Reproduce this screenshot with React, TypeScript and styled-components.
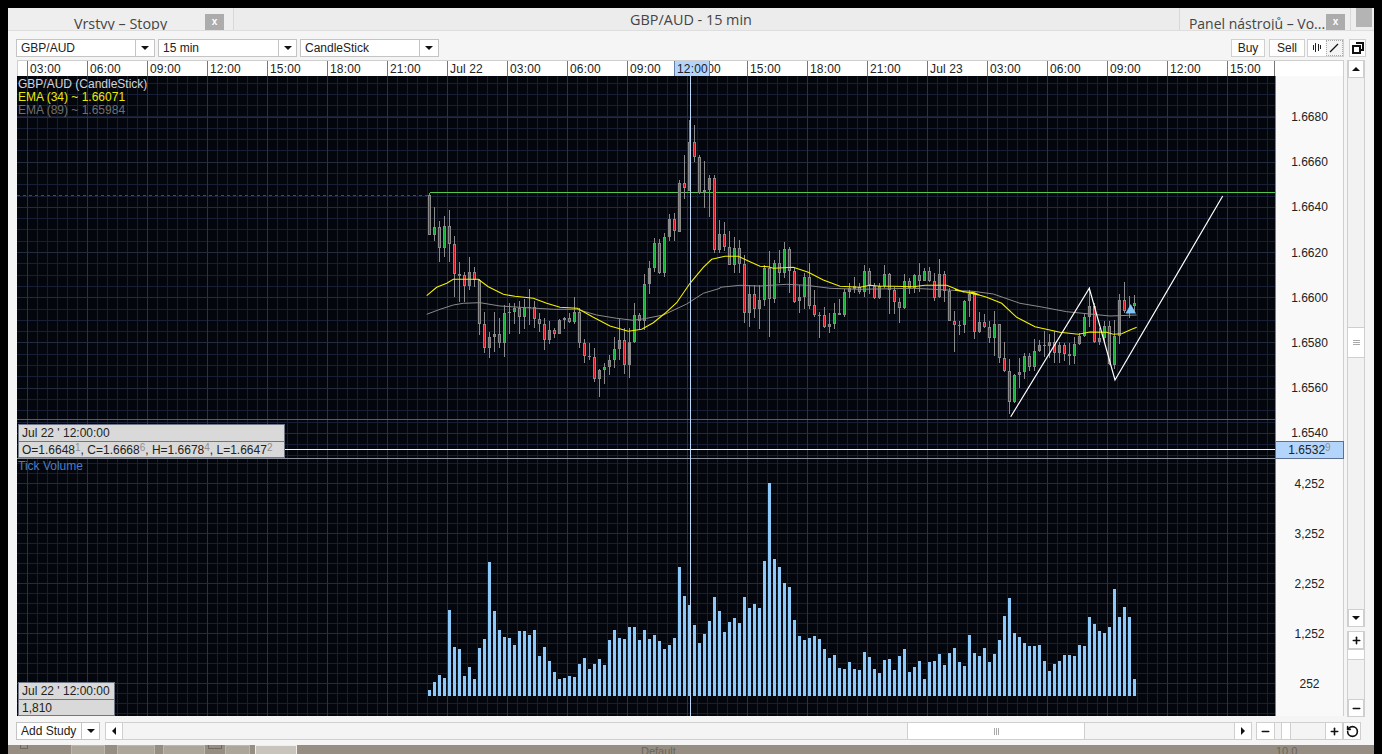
import React from 'react';
import styled, { createGlobalStyle } from 'styled-components';
import { Plus, Minus, RotateCcw } from 'lucide-react';

const GlobalStyle = createGlobalStyle`
  html, body {
    margin: 0;
    padding: 0;
    background: #000;
    overflow: hidden;
  }
  * {
    box-sizing: border-box;
  }
`;

const Page = styled.div`
  width: 1382px;
  height: 754px;
  padding: 8px 0 0 8px;
  background: #000;
  font-family: "Liberation Sans", Arial, sans-serif;
  font-size: 12px;
  color: #222;
  display: flex;
  flex-direction: column;
`;

const Window = styled.div`
  width: 1366px;
  height: 737px;
  background: #f5f5f5;
  display: flex;
  flex-direction: column;
  flex: none;
`;

const TabBar = styled.div`
  height: 23px;
  display: flex;
  background: #eee;
  flex: none;
`;

const Tab = styled.div<{ $width: number; $flex?: boolean; $bg?: string }>`
  width: ${p => p.$width}px;
  flex: ${p => (p.$flex ? '1' : 'none')};
  background: ${p => p.$bg || '#eeeeee'};
  border-bottom: 1px solid #dedede;
  border-right: 1px solid #d8d8d8;
  display: flex;
  justify-content: center;
  position: relative;
  overflow: hidden;
`;

const TabTitle = styled.span<{ $top: number; $left?: number; $size: number }>`
  font-family: "Open Sans", sans-serif;
  font-size: ${p => p.$size}px;
  line-height: 20px;
  color: #444;
  margin-top: ${p => p.$top}px;
  margin-left: ${p => p.$left || 0}px;
  white-space: nowrap;
`;

const TabClose = styled.div<{ $right: number }>`
  position: absolute;
  right: ${p => p.$right}px;
  top: 6px;
  width: 19px;
  height: 17px;
  background: #acacac;
  color: #fff;
  font-size: 10px;
  font-weight: bold;
  text-align: center;
  line-height: 16px;
`;

const CornerBlock = styled.div`
  width: 23px;
  flex: none;
  background: #eee;
  border-bottom: 1px solid #dedede;
  display: flex;
  justify-content: flex-end;
  padding-right: 2px;
`;

const CornerThumb = styled.div`
  width: 16px;
  height: 19px;
  background: #b4b4b4;
`;

const Toolbar = styled.div`
  height: 29px;
  flex: none;
  padding: 8px 8px 3px 8px;
  display: flex;
  background: #f5f5f5;
`;

const SelectBox = styled.div`
  height: 18px;
  display: flex;
  margin-right: 3px;
  background: #fff;
  border: 1px solid #c4c4c4;
`;

const SelectValue = styled.div<{ $width: number }>`
  width: ${p => p.$width}px;
  padding-left: 4px;
  line-height: 17px;
  white-space: nowrap;
  border-right: 1px solid #c4c4c4;
`;

const SelectArrow = styled.div<{ $width: number }>`
  width: ${p => p.$width}px;
  display: flex;
  align-items: center;
  justify-content: center;
`;

const Caret = styled.span<{ $dir: 'up' | 'down' | 'left' | 'right' }>`
  display: block;
  width: 0;
  height: 0;
  border-style: solid;
  border-color: transparent;
  ${p => (p.$dir === 'down' ? 'border-width: 4px 4px 0 4px; border-top-color: #111;' : '')}
  ${p => (p.$dir === 'up' ? 'border-width: 0 4px 4px 4px; border-bottom-color: #111;' : '')}
  ${p => (p.$dir === 'left' ? 'border-width: 4px 4px 4px 0; border-right-color: #111;' : '')}
  ${p => (p.$dir === 'right' ? 'border-width: 4px 0 4px 4px; border-left-color: #111;' : '')}
`;

const Spacer = styled.div`
  flex: 1;
`;

const ToolButton = styled.div<{ $width: number; $ml?: number }>`
  width: ${p => p.$width}px;
  height: 18px;
  margin-left: ${p => p.$ml || 0}px;
  background: #fff;
  border: 1px solid #d0d0d0;
  text-align: center;
  line-height: 17px;
  display: flex;
  align-items: center;
  justify-content: center;
`;

const ToolGroup = styled.div`
  width: 37px;
  height: 18px;
  margin-left: 2px;
  display: flex;
  border: 1px solid #d0d0d0;
  background: #fff;
`;

const ToolCell = styled.div<{ $active?: boolean }>`
  flex: 1;
  display: flex;
  align-items: center;
  justify-content: center;
  ${p => (p.$active ? 'outline: 1px dotted #aaa; outline-offset: -1px; background: #f4f4f4;' : '')}
`;

const Main = styled.div`
  height: 657px;
  flex: none;
  padding-left: 9px;
  display: flex;
  gap: 3px;
`;

const ChartColumn = styled.div`
  width: 1327px;
  display: flex;
  flex-direction: column;
`;

const TimeAxis = styled.div`
  height: 16px;
  flex: none;
  display: flex;
  background: #fff;
  border: 1px solid #cfcfcf;
  border-bottom: none;
  position: relative;
  overflow: hidden;
`;

const TimeCell = styled.div<{ $width: number }>`
  width: ${p => p.$width}px;
  flex: none;
  border-right: 1px solid #777;
  padding-left: 2px;
  line-height: 16px;
  letter-spacing: 0.15px;
  white-space: nowrap;
  color: #222;
`;

const TimeFiller = styled.div`
  flex: 1;
`;

const TimeMarker = styled.div`
  position: absolute;
  left: 656px;
  top: 0;
  width: 36px;
  height: 16px;
  background: #b4d5fb;
  border-left: 1px solid #667fa6;
  border-right: 1px solid #667fa6;
  line-height: 16px;
  padding-left: 2px;
  letter-spacing: 0.15px;
`;

const ChartBody = styled.div`
  height: 640px;
  flex: none;
  display: flex;
`;

const Canvas = styled.div`
  width: 1258px;
  height: 640px;
  flex: none;
  position: relative;
  background: #04060d;
`;

const ChartSvg = styled.svg`
  display: block;
`;

const LegendBlock = styled.div`
  position: absolute;
  left: 1px;
  top: 2px;
`;

const LegendLine = styled.div<{ $color: string }>`
  height: 13px;
  line-height: 13px;
  color: ${p => p.$color};
  white-space: nowrap;
`;

const VolumeLabel = styled.div`
  position: absolute;
  left: 1px;
  top: 383px;
  height: 14px;
  line-height: 14px;
  color: #4b7cc4;
`;

const DataBox = styled.div<{ $top: number; $width: number }>`
  position: absolute;
  left: 1px;
  top: ${p => p.$top}px;
  width: ${p => p.$width}px;
  background: #d9d9d9;
  border: 1px solid #6f7685;
`;

const DataRow = styled.div`
  height: 16px;
  line-height: 16px;
  padding-left: 3px;
  color: #222;
  white-space: nowrap;
  & + & {
    border-top: 1px solid #6f7685;
  }
`;

const Sup = styled.sup`
  font-size: 10px;
  line-height: 0;
  color: #8f8f8f;
  vertical-align: 3px;
`;

const PriceAxis = styled.div`
  width: 69px;
  flex: none;
  background: #f9f9f9;
  border-right: 1px solid #cfcfcf;
  border-left: 1px solid #7a8090;
  position: relative;
  display: flex;
  flex-direction: column;
`;

const PriceSection = styled.div`
  height: 382px;
  flex: none;
  padding-top: 19px;
`;

const VolumeSection = styled.div`
  flex: 1;
  padding-top: 1px;
`;

const AxisLabel = styled.div<{ $height: number }>`
  height: ${p => p.$height}px;
  line-height: ${p => p.$height}px;
  text-align: center;
  color: #222;
`;

const PriceTag = styled.div`
  position: absolute;
  left: -1px;
  right: -1px;
  top: 365px;
  height: 18px;
  background: #b4d5fb;
  border: 1px solid #5f6f8f;
  text-align: center;
  line-height: 17px;
  color: #222;
`;

const SideColumn = styled.div`
  width: 18px;
  display: flex;
  flex-direction: column;
  gap: 4px;
`;

const VScroll = styled.div<{ $height: number }>`
  height: ${p => p.$height}px;
  flex: none;
  display: flex;
  flex-direction: column;
  background: #f2f2f2;
  border-left: 1px solid #cfcfcf;
  border-right: 1px solid #cfcfcf;
`;

const ScrollButton = styled.div<{ $size?: number }>`
  height: 18px;
  width: ${p => (p.$size ? `${p.$size}px` : 'auto')};
  flex: none;
  background: #fff;
  border: 1px solid #cfcfcf;
  display: flex;
  align-items: center;
  justify-content: center;
`;

const VTrack = styled.div`
  flex: 1;
`;

const VThumb = styled.div<{ $top: number; $height: number }>`
  margin-top: ${p => p.$top}px;
  height: ${p => p.$height}px;
  background: #fff;
  border-top: 1px solid #cfcfcf;
  border-bottom: 1px solid #cfcfcf;
  display: flex;
  align-items: center;
  justify-content: center;
`;

const GripH = styled.div`
  width: 7px;
  height: 5px;
  background: repeating-linear-gradient(to bottom, #aaa 0, #aaa 1px, transparent 1px, transparent 2px);
`;

const GripV = styled.div`
  width: 5px;
  height: 7px;
  background: repeating-linear-gradient(to right, #aaa 0, #aaa 1px, transparent 1px, transparent 2px);
`;

const BottomBar = styled.div`
  height: 18px;
  flex: none;
  margin-top: 5px;
  padding-left: 8px;
  display: flex;
`;

const StudySelect = styled(SelectBox)`
  margin-right: 5px;
`;

const HScroll = styled.div<{ $width: number; $ml?: number }>`
  width: ${p => p.$width}px;
  margin-left: ${p => p.$ml || 0}px;
  flex: none;
  display: flex;
  background: #f4f4f4;
  border-top: 1px solid #cfcfcf;
  border-bottom: 1px solid #cfcfcf;
`;

const HThumb = styled.div<{ $left: number; $width: number }>`
  margin-left: ${p => p.$left}px;
  width: ${p => p.$width}px;
  flex: none;
  background: #fff;
  border-left: 1px solid #cfcfcf;
  border-right: 1px solid #cfcfcf;
  display: flex;
  align-items: center;
  justify-content: center;
`;

const HButton = styled(ScrollButton)`
  margin-top: -1px;
  margin-bottom: -1px;
  height: 18px;
`;

const HSpace = styled.div`
  flex: 1;
`;

const Desktop = styled.div`
  flex: none;
  width: 1366px;
  height: 9px;
  background: #968e82;
  display: flex;
  overflow: hidden;
  padding-left: 12px;
  color: #6b665c;
  font-size: 11px;
`;

const DesktopItem = styled.div<{ $width: number; $ml?: number; $tone?: 'frame' | 'mid' | 'light' }>`
  width: ${p => p.$width}px;
  margin-left: ${p => p.$ml || 0}px;
  height: 9px;
  flex: none;
  line-height: 13px;
  white-space: nowrap;
  ${p => (p.$tone === 'frame' ? 'border: 1px solid #6f695f; border-top: none; height: 4px;' : '')}
  ${p => (p.$tone === 'mid' ? 'background: #aca69a; border: 1px solid #bdb8ae; border-bottom: none;' : '')}
  ${p => (p.$tone === 'light' ? 'background: #c8c4bb; border: 1px solid #f0eeea; border-bottom: none;' : '')}
`;

type Candle = [number, number, number, number, string];

const fromZoom = (base: number, rows: Candle[]): Candle[] =>
  rows.map(([h, t, b, l, c]) => [base + h / 3, base + t / 3, base + b / 3, base + l / 3, c]);

const candles: Candle[] = [
  ...fromZoom(180, [
    [40, 46, 166, 166, 'r'], [82, 142, 166, 184, 'g'], [124, 142, 205, 245, 'r'], [108, 139, 205, 232, 'g'],
    [91, 139, 193, 245, 'r'], [168, 193, 283, 350, 'r'], [247, 283, 287, 365, 'n'], [277, 286, 319, 365, 'r'],
    [232, 277, 319, 331, 'g'], [262, 277, 300, 322, 'r'], [298, 300, 433, 466, 'r'], [397, 433, 505, 520, 'r'],
    [455, 472, 505, 535, 'g'], [397, 463, 472, 517, 'g'], [415, 463, 490, 505, 'r'], [376, 400, 490, 532, 'g'],
    [370, 397, 400, 463, 'n'], [370, 385, 397, 433, 'g'], [364, 385, 412, 463, 'r'], [358, 382, 412, 448, 'g'],
    [328, 380, 382, 436, 'n'], [364, 380, 418, 445, 'r'], [400, 418, 433, 457, 'r'], [415, 433, 481, 511, 'r'],
    [424, 451, 481, 493, 'g'], [445, 451, 463, 475, 'r'], [418, 421, 463, 463, 'g'], [412, 415, 421, 447, 'g'],
    [400, 415, 426, 430, 'r'], [352, 397, 426, 433, 'g'], [385, 397, 490, 505, 'r'], [478, 490, 529, 550, 'r'],
    [490, 529, 532, 541, 'n'], [505, 532, 598, 607, 'r'], [568, 571, 598, 652, 'g'], [550, 562, 571, 613, 'g'],
    [526, 541, 562, 586, 'g'], [472, 508, 541, 565, 'g'], [418, 481, 508, 541, 'g'], [445, 481, 556, 583, 'r'],
    [445, 487, 556, 595, 'n'], [370, 406, 487, 490, 'g'], [400, 406, 424, 451, 'r'], [283, 313, 424, 451, 'g'],
    [244, 265, 313, 341, 'n'], [175, 190, 265, 277, 'g'], [178, 190, 280, 283, 'r'], [160, 172, 280, 292, 'g'],
    [103, 118, 172, 184, 'n'], [100, 118, 154, 184, 'r'],
  ]),
  ...fromZoom(110, [
    [210, 220, 365, 365, 'g'], [135, 220, 235, 268, 'r'], [30, 97, 242, 242, 'g'], [45, 97, 142, 155, 'r'],
    [135, 142, 250, 253, 'r'], [154, 241, 250, 295, 'n'], [196, 205, 241, 322, 'g'], [196, 205, 421, 430, 'r'],
    [331, 373, 421, 430, 'g'], [337, 373, 412, 424, 'r'], [364, 412, 466, 466, 'r'], [382, 415, 466, 490, 'g'],
    [391, 415, 463, 490, 'r'], [436, 463, 610, 640, 'r'], [526, 553, 610, 652, 'g'], [526, 553, 598, 625, 'r'],
    [526, 571, 598, 658, 'g'], [466, 475, 571, 589, 'g'], [424, 475, 568, 682, 'r'], [451, 460, 568, 580, 'g'],
    [421, 460, 490, 520, 'r'], [397, 418, 490, 505, 'g'], [412, 418, 484, 550, 'r'], [475, 484, 577, 580, 'r'],
    [526, 562, 574, 610, 'g'], [490, 502, 562, 598, 'g'], [460, 502, 589, 598, 'r'], [541, 586, 616, 622, 'r'],
    [607, 615, 617, 685, 'n'], [592, 616, 652, 655, 'r'], [610, 643, 652, 670, 'g'], [580, 610, 643, 658, 'g'],
    [568, 610, 616, 616, 'r'], [538, 547, 616, 622, 'g'], [520, 535, 547, 565, 'g'], [502, 529, 538, 550, 'n'],
    [520, 532, 547, 553, 'r'], [466, 484, 547, 562, 'g'], [475, 484, 526, 553, 'r'], [520, 529, 565, 568, 'r'],
    [520, 529, 565, 568, 'g'], [466, 493, 529, 535, 'g'], [490, 493, 541, 613, 'r'], [532, 541, 577, 613, 'r'],
    [565, 577, 595, 640, 'r'], [493, 514, 595, 598, 'g'], [505, 514, 535, 553, 'r'], [493, 496, 535, 550, 'g'],
    [460, 496, 514, 547, 'r'], [475, 484, 514, 514, 'g'], [472, 484, 514, 517, 'r'], [490, 514, 565, 572, 'r'],
    [448, 493, 562, 565, 'g'],
  ]),
  ...fromZoom(180, [
    [274, 283, 334, 367, 'r'], [325, 334, 424, 424, 'r'], [394, 424, 436, 515, 'r'], [424, 435, 437, 466, 'n'],
    [361, 364, 436, 460, 'g'], [331, 343, 364, 412, 'g'], [340, 343, 457, 478, 'r'], [397, 427, 457, 460, 'g'],
    [403, 427, 442, 445, 'r'], [424, 442, 475, 490, 'r'], [394, 433, 475, 529, 'g'], [433, 433, 535, 550, 'r'],
    [487, 535, 574, 577, 'r'], [538, 574, 667, 703, 'r'], [583, 586, 667, 670, 'g'], [535, 577, 586, 625, 'g'],
    [520, 529, 577, 598, 'g'], [520, 529, 562, 574, 'r'], [478, 514, 562, 574, 'g'], [481, 496, 514, 517, 'g'],
    [454, 496, 499, 532, 'n'], [463, 487, 499, 535, 'g'], [454, 487, 520, 550, 'r'], [487, 496, 520, 550, 'g'],
    [490, 496, 523, 544, 'r'], [490, 523, 529, 556, 'n'], [472, 493, 529, 553, 'g'], [460, 469, 493, 496, 'g'],
    [403, 412, 469, 472, 'g'], [322, 379, 412, 442, 'g'], [370, 379, 487, 490, 'r'], [445, 475, 487, 496, 'g'],
    [424, 439, 475, 487, 'g'], [424, 439, 553, 556, 'r'], [421, 469, 556, 568, 'g'], [343, 361, 469, 493, 'g'],
    [307, 361, 394, 400, 'r'], [349, 394, 400, 415, 'n'], [346, 370, 379, 397, 'g'],
  ]),
];

const volumeTopsA = [
  630, 606, 585, 594, 390, 501, 507, 588, 561, 597, 504, 477, 246, 393, 450, 471, 474, 495, 453, 453, 465, 450, 528, 501,
  543, 576, 597, 594, 588, 591, 552, 534, 567, 552, 537, 555, 480, 450, 474, 477, 441, 441, 480, 450, 477, 465, 483, 507,
  495, 474, 261, 348, 375, 435, 489, 462, 423, 351, 393, 456, 426, 414, 429, 351, 384, 372, 384, 243, 9, 237,
];

const volumeTopsB = [
  69, 81, 180, 228, 240, 234, 228, 237, 267, 294, 285, 324, 327, 306, 327, 330, 276, 291, 327, 339, 300, 297, 330, 288,
  267, 336, 321, 303, 357, 306, 303, 282, 315, 279, 264, 306, 318, 225, 279, 288, 264, 306, 282, 240, 168, 114, 219, 231,
  249, 258, 258, 255, 303, 333, 312, 303, 285, 285, 288, 255, 258, 171, 192, 213, 219, 201, 87, 171, 141, 171, 357,
];

const volumes = [
  ...volumeTopsA.map(t => 480 + t / 3),
  480 + 261 / 3,
  ...volumeTopsB.map(t => 560 + t / 3),
];

const points = (x0: number, y0: number, list: number[][]) =>
  list.map(([x, y]) => `${(x0 + x / 3).toFixed(1)},${(y0 + y / 3).toFixed(1)}`).join(' ');

const yellowLine = [
  points(420, 180, [[20, 347], [50, 322], [80, 310], [100, 298], [175, 298], [205, 320], [250, 343], [285, 349], [340, 355], [380, 370], [420, 382], [472, 385], [520, 412], [570, 438], [625, 454], [665, 448], [700, 428], [735, 400], [770, 368], [810, 310], [850, 262], [875, 238]]),
  points(680, 110, [[135, 439], [175, 439], [205, 453], [240, 469], [265, 470], [280, 475], [340, 472], [385, 487], [430, 510], [480, 529], [540, 532], [570, 526], [600, 529], [640, 529], [700, 530], [735, 526], [800, 526], [850, 546], [880, 547], [900, 556]]),
  points(940, 180, [[45, 330], [100, 340], [140, 352], [185, 370], [230, 412], [285, 440], [360, 457], [415, 463], [450, 456], [500, 457], [520, 463], [545, 461], [570, 450], [590, 442]]),
].join(' ');

const grayLine = [
  points(420, 180, [[20, 403], [60, 388], [100, 375], [130, 370], [180, 368], [240, 378], [300, 382], [400, 388], [470, 388], [530, 405], [590, 415], [640, 421], [680, 415], [730, 405], [800, 372], [850, 340], [900, 325]]),
  points(680, 110, [[120, 532], [180, 526], [240, 528], [320, 523], [380, 526], [450, 535], [540, 538], [700, 535], [880, 544]]),
  points(940, 180, [[160, 342], [240, 370], [300, 380], [380, 395], [450, 402], [510, 408], [590, 405]]),
].join(' ');

const bodyColors: Record<string, string> = { r: '#d0101c', g: '#12b030', n: '#8a8a8a' };

const range = (from: number, to: number, step: number) => {
  const out: number[] = [];
  for (let v = from; v <= to; v += step) out.push(v);
  return out;
};

const ChartDrawing: React.FC = () => (
  <ChartSvg width={1258} height={640} viewBox="17 76 1258 640">
    <g shapeRendering="crispEdges">
      {range(27.5, 1275, 10).map(x => (
        <line key={x} x1={x} x2={x} y1={76} y2={716} stroke="#171e35" />
      ))}
      {range(83, 456, 11.3).map(y => (
        <line key={y} x1={17} x2={1275} y1={Math.floor(y) + 0.5} y2={Math.floor(y) + 0.5} stroke="#171e35" />
      ))}
      {range(463, 716, 10).map(y => (
        <line key={y} x1={17} x2={1275} y1={y + 0.5} y2={y + 0.5} stroke="#171e35" />
      ))}
      {range(27.5, 1275, 60).map(x => (
        <line key={x} x1={x} x2={x} y1={76} y2={716} stroke="#2c3142" />
      ))}
      {range(117, 440, 45.2).map(y => (
        <line key={y} x1={17} x2={1275} y1={Math.floor(y) + 0.5} y2={Math.floor(y) + 0.5} stroke="#252b3e" />
      ))}
      {range(483, 683, 50).map(y => (
        <line key={y} x1={17} x2={1275} y1={y + 0.5} y2={y + 0.5} stroke="#252b3e" />
      ))}
      <line x1={17} x2={1275} y1={458.5} y2={458.5} stroke="#8a8f9c" />
      <line x1={17} x2={430} y1={195.5} y2={195.5} stroke="#4a4a4a" strokeDasharray="3 3" />
      <line x1={430} x2={1275} y1={192.5} y2={192.5} stroke="#52c84e" />
      <line x1={17} x2={1275} y1={419.5} y2={419.5} stroke="#b8353a" />
      {volumes.map((top, i) => (
        <rect key={i} x={428 + i * 5} y={Math.round(top)} width={3} height={696 - Math.round(top)} fill="#8ccafb" />
      ))}
      {candles.map(([hi, top, bot, lo, c], i) => {
        const x = 429 + i * 5;
        const t = Math.round(top);
        const b = Math.max(Math.round(bot), t + 1);
        return (
          <g key={i}>
            <rect x={x} y={Math.round(hi)} width={1} height={Math.max(Math.round(lo) - Math.round(hi), 1)} fill="#8a8a8a" />
            <rect x={x - 1} y={t} width={3} height={b - t} fill="#8a8a8a" />
            <rect x={x} y={t + 1} width={1} height={Math.max(b - t - 2, 0)} fill={bodyColors[c]} />
          </g>
        );
      })}
    </g>
    <polyline points={grayLine} fill="none" stroke="#8a8a8a" strokeWidth={1} />
    <polyline points={yellowLine} fill="none" stroke="#f2f200" strokeWidth={1.1} />
    <polyline points="1010.7,416.7 1089.3,288.3 1115,380 1222.7,196" fill="none" stroke="#fff" strokeWidth={1.2} />
    <polygon points="1130.7,304 1136,313.5 1125.5,313.5" fill="#80c4f8" />
    <g shapeRendering="crispEdges">
      <line x1={690.5} x2={690.5} y1={76} y2={716} stroke="#bcd6f6" />
      <line x1={285} x2={1275} y1={449.5} y2={449.5} stroke="#f0f4fa" />
    </g>
  </ChartSvg>
);

const timeLabels = [
  '03:00', '06:00', '09:00', '12:00', '15:00', '18:00', '21:00', 'Jul 22', '03:00', '06:00', '09:00', '12:00',
  '15:00', '18:00', '21:00', 'Jul 23', '03:00', '06:00', '09:00', '12:00', '15:00',
];

const priceLabels = ['1.6680', '1.6660', '1.6640', '1.6620', '1.6600', '1.6580', '1.6560', '1.6540'];
const volumeLabels = ['4,252', '3,252', '2,252', '1,252', '252'];

const App: React.FC = () => (
  <Page>
    <GlobalStyle />
    <Window>
      <TabBar>
        <Tab $width={226}>
          <TabTitle $top={6} $size={14.4}>Vrstvy – Stopy</TabTitle>
          <TabClose $right={9}>x</TabClose>
        </Tab>
        <Tab $width={0} $flex $bg="#ececec">
          <TabTitle $top={2} $left={-31} $size={14.4}>GBP/AUD - 15 min</TabTitle>
        </Tab>
        <Tab $width={171}>
          <TabTitle $top={6} $left={-16} $size={14}>Panel nástrojů – Vo...</TabTitle>
          <TabClose $right={5}>x</TabClose>
        </Tab>
        <CornerBlock>
          <CornerThumb />
        </CornerBlock>
      </TabBar>
      <Toolbar>
        <SelectBox>
          <SelectValue $width={119}>GBP/AUD</SelectValue>
          <SelectArrow $width={18}><Caret $dir="down" /></SelectArrow>
        </SelectBox>
        <SelectBox>
          <SelectValue $width={120}>15 min</SelectValue>
          <SelectArrow $width={17}><Caret $dir="down" /></SelectArrow>
        </SelectBox>
        <SelectBox>
          <SelectValue $width={119}>CandleStick</SelectValue>
          <SelectArrow $width={18}><Caret $dir="down" /></SelectArrow>
        </SelectBox>
        <Spacer />
        <ToolButton $width={34}>Buy</ToolButton>
        <ToolButton $width={36} $ml={4}>Sell</ToolButton>
        <ToolGroup>
          <ToolCell>
            <svg width="10" height="12" viewBox="0 0 10 12">
              <path d="M1.5 3v5M3.5 1v9M6.5 2v7M8.5 3v4" stroke="#222" strokeWidth="1" shapeRendering="crispEdges" />
            </svg>
          </ToolCell>
          <ToolCell $active>
            <svg width="10" height="10" viewBox="0 0 10 10">
              <path d="M1 9L9 1" stroke="#111" strokeWidth="1.2" />
            </svg>
          </ToolCell>
        </ToolGroup>
        <ToolButton $width={17} $ml={5}>
          <svg width="12" height="12" viewBox="0 0 12 12">
            <path d="M4 1h7v7H8M1 4h7v7H1z" fill="none" stroke="#111" strokeWidth="1.3" shapeRendering="crispEdges" />
          </svg>
        </ToolButton>
      </Toolbar>
      <Main>
        <ChartColumn>
          <TimeAxis>
            <TimeCell $width={10} />
            {timeLabels.map((label, i) => (
              <TimeCell key={i} $width={i === timeLabels.length - 1 ? 47 : 60}>
                {label}
              </TimeCell>
            ))}
            <TimeFiller />
            <TimeMarker>12:00</TimeMarker>
          </TimeAxis>
          <ChartBody>
            <Canvas>
              <ChartDrawing />
              <LegendBlock>
                <LegendLine $color="#d2d6de">GBP/AUD (CandleStick)</LegendLine>
                <LegendLine $color="#ecec00">EMA (34) ~ 1.66071</LegendLine>
                <LegendLine $color="#6f6f6f">EMA (89) ~ 1.65984</LegendLine>
              </LegendBlock>
              <DataBox $top={348} $width={267}>
                <DataRow>Jul 22 ' 12:00:00</DataRow>
                <DataRow>
                  O=1.6648<Sup>1</Sup>, C=1.6668<Sup>6</Sup>, H=1.6678<Sup>4</Sup>, L=1.6647<Sup>2</Sup>
                </DataRow>
              </DataBox>
              <VolumeLabel>Tick Volume</VolumeLabel>
              <DataBox $top={606} $width={97}>
                <DataRow>Jul 22 ' 12:00:00</DataRow>
                <DataRow>1,810</DataRow>
              </DataBox>
            </Canvas>
            <PriceAxis>
              <PriceSection>
                {priceLabels.map(label => (
                  <AxisLabel key={label} $height={45.2}>{label}</AxisLabel>
                ))}
              </PriceSection>
              <VolumeSection>
                {volumeLabels.map(label => (
                  <AxisLabel key={label} $height={50}>{label}</AxisLabel>
                ))}
              </VolumeSection>
              <PriceTag>1.6532<Sup>9</Sup></PriceTag>
            </PriceAxis>
          </ChartBody>
        </ChartColumn>
        <SideColumn>
          <VScroll $height={567}>
            <ScrollButton><Caret $dir="up" /></ScrollButton>
            <VTrack>
              <VThumb $top={249} $height={31}><GripH /></VThumb>
            </VTrack>
            <ScrollButton><Caret $dir="down" /></ScrollButton>
          </VScroll>
          <VScroll $height={86}>
            <ScrollButton><Plus size={11} strokeWidth={3.5} color="#111" /></ScrollButton>
            <VTrack>
              <VThumb $top={0} $height={11} />
            </VTrack>
            <ScrollButton><Minus size={11} strokeWidth={3.5} color="#111" /></ScrollButton>
          </VScroll>
        </SideColumn>
      </Main>
      <BottomBar>
        <StudySelect>
          <SelectValue $width={65}>Add Study</SelectValue>
          <SelectArrow $width={17}><Caret $dir="down" /></SelectArrow>
        </StudySelect>
        <HScroll $width={1147}>
          <HButton $size={18}><Caret $dir="left" /></HButton>
          <HThumb $left={784} $width={178}><GripV /></HThumb>
          <HSpace />
          <HButton $size={18}><Caret $dir="right" /></HButton>
        </HScroll>
        <HScroll $width={87} $ml={4}>
          <HButton $size={19}><Minus size={11} strokeWidth={3.5} color="#111" /></HButton>
          <HThumb $left={6} $width={10} />
          <HSpace />
          <HButton $size={18}><Plus size={11} strokeWidth={3.5} color="#111" /></HButton>
        </HScroll>
        <ScrollButton $size={18}>
          <RotateCcw size={13} strokeWidth={3} color="#111" />
        </ScrollButton>
      </BottomBar>
    </Window>
    <Desktop>
      <DesktopItem $width={8} $tone="frame" />
      <DesktopItem $width={34} $ml={43} $tone="mid" />
      <DesktopItem $width={38} $ml={12} $tone="mid" />
      <DesktopItem $width={42} $ml={8} $tone="mid" />
      <DesktopItem $width={14} $ml={3} $tone="frame" />
      <DesktopItem $width={25} $ml={3} $tone="mid" />
      <DesktopItem $width={42} $ml={5} $tone="light" />
      <DesktopItem $width={60} $ml={344}>Default</DesktopItem>
      <DesktopItem $width={40} $ml={575}>10.0</DesktopItem>
    </Desktop>
  </Page>
);

export default App;
